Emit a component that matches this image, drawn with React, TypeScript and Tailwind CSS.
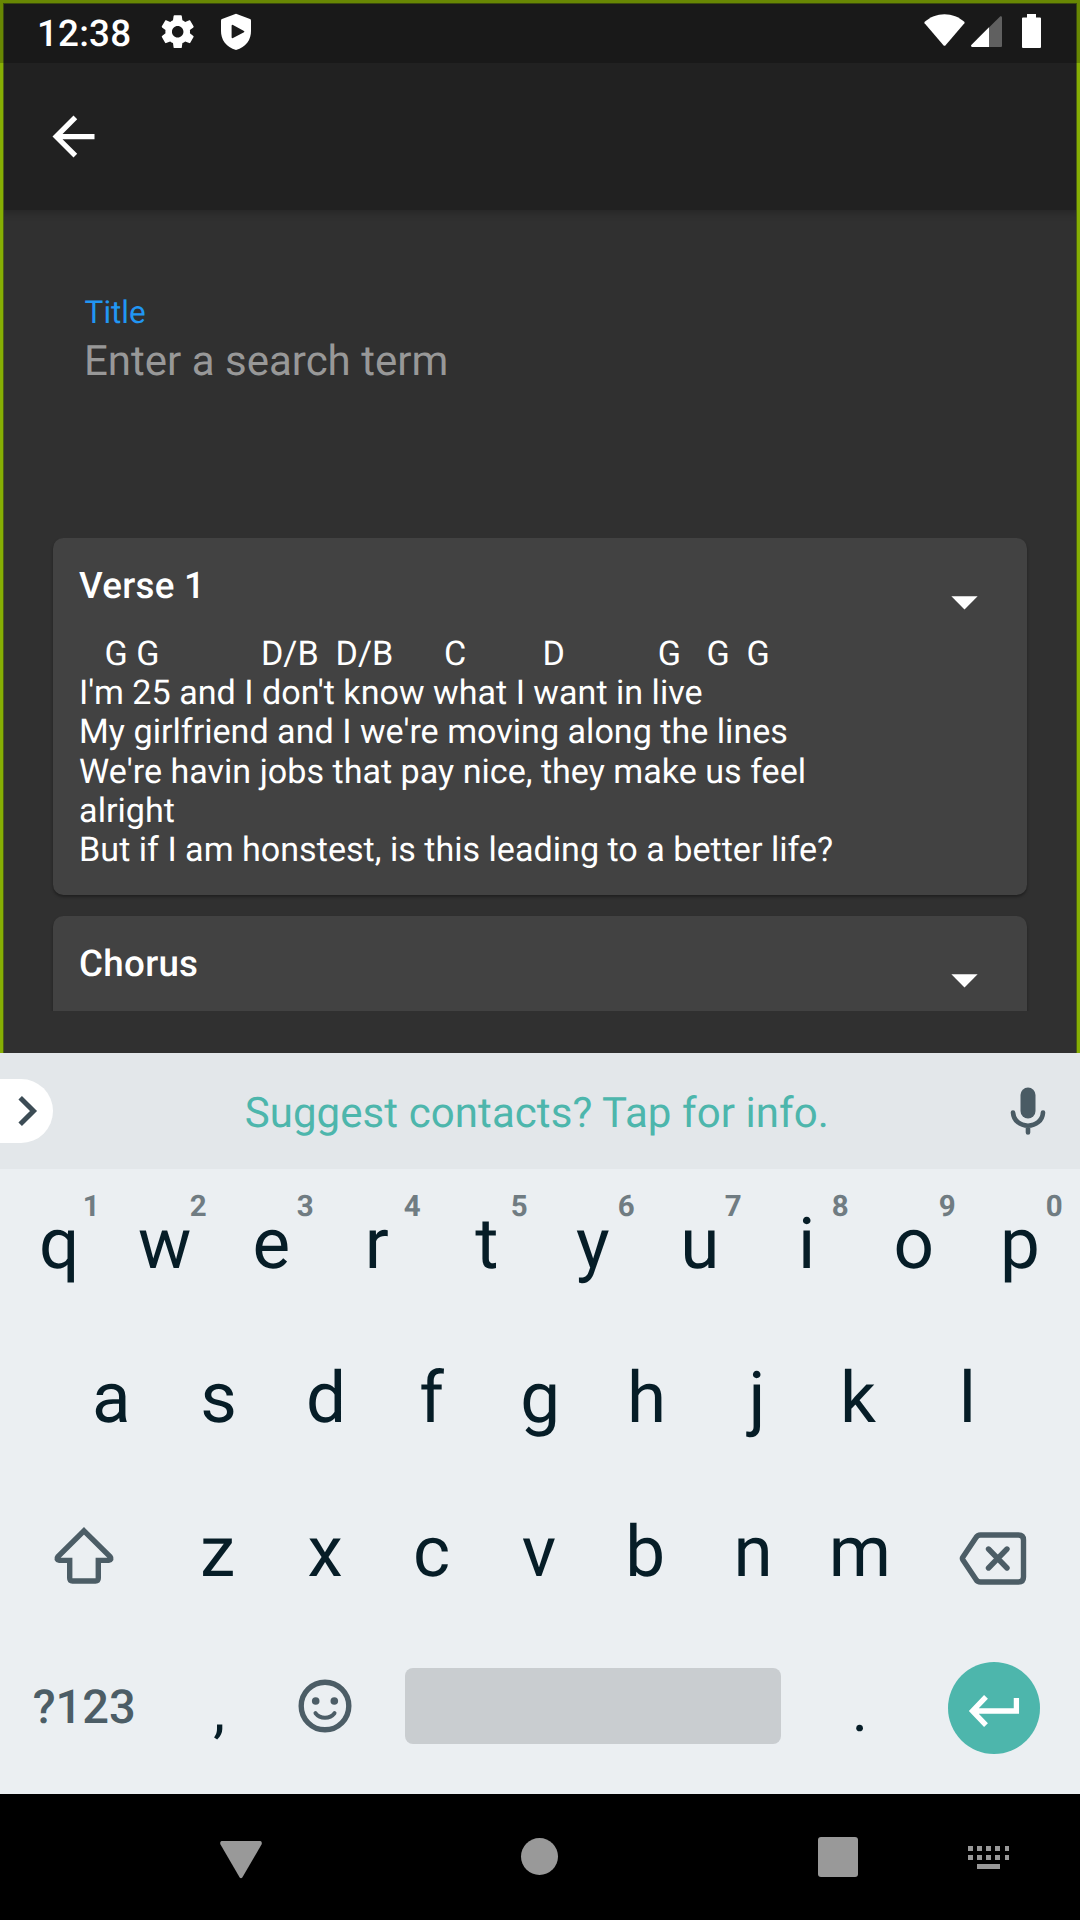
import React from "react";

const SETTINGS =
  "M19.43 12.98c.04-.32.07-.64.07-.98s-.03-.66-.07-.98l2.11-1.65c.19-.15.24-.42.12-.64l-2-3.46c-.12-.22-.39-.3-.61-.22l-2.49 1c-.52-.4-1.08-.73-1.69-.98l-.38-2.65C14.46 2.18 14.25 2 14 2h-4c-.25 0-.46.18-.49.42l-.38 2.65c-.61.25-1.17.59-1.69.98l-2.49-1c-.23-.09-.49 0-.61.22l-2 3.46c-.13.22-.07.49.12.64l2.11 1.65c-.04.32-.07.65-.07.98s.03.66.07.98l-2.11 1.65c-.19.15-.24.42-.12.64l2 3.46c.12.22.39.3.61.22l2.49-1c.52.4 1.08.73 1.69.98l.38 2.65c.03.24.24.42.49.42h4c.25 0 .46-.18.49-.42l.38-2.65c.61-.25 1.17-.59 1.69-.98l2.49 1c.23.09.49 0 .61-.22l2-3.46c.12-.22.07-.49-.12-.64l-2.11-1.65zM12 15.5c-1.93 0-3.5-1.57-3.5-3.5s1.57-3.5 3.5-3.5 3.5 1.57 3.5 3.5-1.57 3.5-3.5 3.5z";

function StatusBar() {
  return (
    <div className="relative z-20 flex h-[63px] items-start bg-black/[.22] pl-[37px] text-white">
      <span className="mt-[12px] w-[121px] text-[36.75px] leading-[43px] font-medium tracking-[0.2px]">12:38</span>
      <svg className="mt-[12px] h-[39.4px] w-[39.4px]" viewBox="0 0 24 24" fill="currentColor">
        <path d={SETTINGS} />
      </svg>
      <svg className="mt-[13px] ml-[23.6px] h-[38px] w-[30px]" viewBox="0 0 30 38">
        <path
          d="M15 .7 L29 6 Q30 6.4 30 7.4 V18 C30 27 25 34 15 37 C5 34 0 27 0 18 V7.4 Q0 6.4 1 6 Z"
          fill="#fff"
        />
        <path d="M11 12 Q11.3 11.6 12 12 L23 18 Q23.8 18.6 23 19.2 L12 25 Q11 25.4 10.6 24.6 V12.4 Z" fill="#1a1a1a" />
      </svg>
      <div className="ml-auto flex items-start pr-[39px]">
        <svg className="mt-[14px] h-[33px] w-[41px]" viewBox="0 0 41 33" fill="currentColor">
          <path d="M.7 7.8 C6 3 13 .2 20.500 .2 S35 3 40.300 7.800 Q40.900 8.500 40.400 9.300 L21.600 31.300 Q20.500 32.300 19.400 31.300 L.6 9.300 Q.1 8.500 .7 7.800 Z" />
        </svg>
        <svg className="mt-[16px] ml-[6px] h-[31px] w-[31px]" viewBox="0 0 31 31">
          <path d="M29.300 .3 Q31 0 31 1.500 V30 Q31 31 30 31 H18 V11.600 Z" fill="#606060" />
          <path d="M18 11.200 V31 H1 Q-.5 30.300 .3 28.900 Z" fill="#fff" />
        </svg>
        <svg className="mt-[14px] ml-[20px] h-[34px] w-[19px]" viewBox="0 0 19 34" fill="currentColor">
          <path d="M5 0 H14 V3.500 H18 Q19 3.500 19 4.500 V33 Q19 34 18 34 H1 Q0 34 0 33 V4.500 Q0 3.500 1 3.500 H5 Z" />
        </svg>
      </div>
    </div>
  );
}

function SongCard({ title, lines }: { title: string; lines: string[] }) {
  return (
    <section className="flex h-[357px] shrink-0 justify-between rounded-[10.5px] bg-[#424242] pt-[26.25px] pr-[30.9px] pl-[26.1px] text-white shadow-[0_2px_3px_rgba(0,0,0,0.35)]">
      <div>
        <h2 className="mb-[27.6px] text-[36.75px] leading-[43px] font-medium tracking-[0.26px]">{title}</h2>
        <div className="text-[34.125px] leading-[39.27px] whitespace-pre">
          {lines.map((line, i) => (
            <p key={i}>{line}</p>
          ))}
        </div>
      </div>
      <svg className="mt-[5.5px] h-[63px] w-[63px]" viewBox="0 0 24 24" fill="currentColor">
        <path d="M7 10l5 5 5-5z" />
      </svg>
    </section>
  );
}

const VERSE = [
  "   G G            D/B  D/B      C         D           G   G  G",
  "I'm 25 and I don't know what I want in live",
  "My girlfriend and I we're moving along the lines",
  "We're havin jobs that pay nice, they make us feel",
  "alright",
  "But if I am honstest, is this leading to a better life?",
];

function AppScreen() {
  return (
    <div className="relative flex h-[1053px] flex-col bg-[#303030]">
      <div className="pointer-events-none absolute inset-0 z-10 border-[3px] border-b-0 border-[#86ae04]">
        <div className="h-full border border-b-0 border-[#4b5e14]" />
      </div>
      <header className="relative h-[210px] bg-[#212121] shadow-[0_2px_8px_rgba(0,0,0,0.25)]">
        <StatusBar />
        <svg className="mt-[42px] ml-[42px] h-[63px] w-[63px]" viewBox="0 0 24 24" fill="#fff">
          <path d="M20 11H7.830l5.590-5.590L12 4l-8 8 8 8 1.410-1.410L7.830 13H20v-2z" />
        </svg>
      </header>
      <div className="flex h-[328px] flex-col gap-[6px] pt-[84px] pl-[84px]">
        <label className="pl-[0.6px] text-[31.5px] leading-[37px] text-[#2196f3]">Title</label>
        <div className="text-[42px] leading-[49px] text-[#989898]">Enter a search term</div>
      </div>
      <main className="flex h-[473px] flex-col gap-[21px] overflow-hidden px-[53px]">
        <SongCard title="Verse 1" lines={VERSE} />
        <SongCard title="Chorus" lines={[]} />
      </main>
    </div>
  );
}

/* Horizontal distance from the middle of a glyph's advance to the middle of its ink, in px at 71px. */
const INK_OFFSET: Record<string, number> = {
  q: -1.4, e: 0.3, r: 1.9, t: -1.2, p: 0.8,
  a: 0.2, d: -0.6, f: 0.9, g: -0.6, j: -3.4, k: 2.6,
  z: 0.3, c: 0.5, b: 0.8, ",": -1.2,
};

function Key({ label, hint }: { label: string; hint?: string }) {
  return (
    <div className="relative flex h-full w-[107px] items-center justify-center pb-[5px] text-[71px] leading-none text-[#061d27]">
      <span style={{ translate: `${-(INK_OFFSET[label] ?? 0)}px` }}>{label}</span>
      {hint && (
        <span className="absolute top-[20px] right-[11.5px] text-[29.5px] leading-[34px] font-bold text-[#707c82]">{hint}</span>
      )}
    </div>
  );
}

function PunctuationKey({ label }: { label: string }) {
  return (
    <div className="flex h-full w-[107px] items-center justify-center pt-[3px] text-[60px] leading-none text-[#061d27]">
      <span style={{ translate: `${-(INK_OFFSET[label] ?? 0)}px` }}>{label}</span>
    </div>
  );
}

function Keyboard() {
  return (
    <div className="h-[741px] bg-[#ebeff2]">
      <div className="flex h-[116px] items-center bg-[#e3e7ea]">
        <div className="flex h-[64px] w-[52.7px] items-center rounded-r-[32px] bg-white">
          <svg className="ml-[17px] h-[32px] w-[21px]" viewBox="0 0 21 32" fill="none">
            <path d="M3.200 2.800 L16.500 16 L3.200 29.200" stroke="#3c4c55" strokeWidth="5" />
          </svg>
        </div>
        <div className="mt-[5px] ml-[192px] text-[42px] leading-[49px] tracking-[0.08px] text-[#4db6ac]">
          Suggest contacts? Tap for info.
        </div>
        <svg className="mr-[34px] mb-[1px] ml-auto h-[48px] w-[36px]" viewBox="0 0 36 48">
          <rect x="10.500" y=".5" width="15" height="31" rx="7.500" fill="#4a5b64" />
          <path d="M3 25.500 C3.500 33.500 10 38.700 18 38.700 S32.500 33.500 33 25.500 M18 38.700 V45.500" fill="none" stroke="#4a5b64" strokeWidth="4.600" strokeLinecap="round" />
        </svg>
      </div>
      <div className="flex h-[154.5px] justify-center pt-[1px] pr-[1.5px]">
        {"qwertyuiop".split("").map((c, i) => (
          <Key key={c} label={c} hint={String((i + 1) % 10)} />
        ))}
      </div>
      <div className="flex h-[154.5px] justify-center pr-[1px]">
        {"asdfghjkl".split("").map((c) => (
          <Key key={c} label={c} />
        ))}
      </div>
      <div className="flex h-[154.5px] justify-center pr-[2px]">
        <div className="flex w-[160.5px] justify-center">
          <svg className="mt-[48px] h-[60px] w-[62px]" viewBox="0 0 62 60" fill="none">
            <path
              d="M31 4.800 L57 30.500 Q59.500 33.600 55.500 34.400 H45.300 V52 Q45.300 55 42.500 55 H19.500 Q16.700 55 16.700 52 V34.400 H6.500 Q2.500 33.600 5 30.500 Z"
              stroke="#4c5d66"
              strokeWidth="5.400"
            />
          </svg>
        </div>
        {"zxcvbnm".split("").map((c) => (
          <Key key={c} label={c} />
        ))}
        <div className="flex w-[160.5px] justify-center pr-[2px]">
          <svg className="mt-[53px] h-[56px] w-[70px]" viewBox="0 0 70 56" fill="none" stroke="#4c5d66" strokeWidth="5.400">
            <path d="M22.500 4 H60.500 Q65.500 4 65.500 9 V46 Q65.500 51 60.500 51 H22.500 Q19.500 51 18 48.500 L4.800 28.700 Q4 27.500 4.800 26.300 L18 6.500 Q19.500 4 22.500 4 Z" />
            <path d="M30.500 18 L49 37 M49 18 L30.500 37" strokeLinecap="round" />
          </svg>
        </div>
      </div>
      <div className="flex h-[154.5px] justify-center pr-[2px]">
        <div className="flex w-[160.5px] items-center justify-center pb-[3px] text-[47px] font-medium text-[#4c5d66]">?123</div>
        <PunctuationKey label="," />
        <div className="flex w-[107px] justify-center">
          <svg className="mt-[46px] h-[54px] w-[54px]" viewBox="0 0 54 54" fill="none" stroke="#4c5d66">
            <circle cx="27" cy="27" r="23.800" strokeWidth="5.400" />
            <circle cx="17.700" cy="22" r="3.800" fill="#4c5d66" stroke="none" />
            <circle cx="36.300" cy="22" r="3.800" fill="#4c5d66" stroke="none" />
            <path d="M17.500 34.200 Q21 38.700 27 38.700 T36.500 34.200" strokeWidth="4" strokeLinecap="round" />
          </svg>
        </div>
        <div className="mx-[26px] mt-[35.500px] h-[76px] w-[376px] rounded-[8px] bg-[#c9cdd0]" />
        <PunctuationKey label="." />
        <div className="flex w-[160.5px] justify-center">
          <div className="mt-[29.500px] flex h-[92px] w-[92px] items-center justify-center rounded-full bg-[#4db6ac]">
            <svg className="mt-[6px] h-[34px] w-[52px]" viewBox="0 0 52 34" fill="none" stroke="#fff" strokeWidth="5.300">
              <path d="M18 2.800 L4.500 17 L18 31.200 M5 17 H48.400 V4" />
            </svg>
          </div>
        </div>
      </div>
    </div>
  );
}

function NavBar() {
  return (
    <div className="flex h-[126px] items-center bg-black text-[#999999]">
      <svg className="mt-[5px] ml-[220px] h-[38px] w-[42px]" viewBox="0 0 42 38" fill="currentColor">
        <path d="M1.500 0 H40.500 Q42.500 1 41.500 3.500 L22.300 36.500 Q21 38 19.700 36.500 L.5 3.500 Q-.5 1 1.500 0 Z" />
      </svg>
      <div className="mb-[1px] ml-[259px] h-[37px] w-[37px] rounded-full bg-current" />
      <div className="ml-[260px] h-[40px] w-[40px] rounded-[3px] bg-current" />
      <div className="mt-[1px] ml-[110px] flex w-[41px] flex-col gap-[4px]">
        {[0, 1].map((row) => (
          <div key={row} className="flex justify-between">
            {[0, 1, 2, 3, 4].map((dot) => (
              <div key={dot} className="h-[5px] w-[4.5px] bg-current" />
            ))}
          </div>
        ))}
        <div className="mx-auto h-[5px] w-[23px] bg-current" />
      </div>
    </div>
  );
}

export default function App() {
  return (
    <div className="h-[1920px] w-[1080px] overflow-hidden font-['Roboto',sans-serif] [text-rendering:geometricPrecision]">
      <AppScreen />
      <Keyboard />
      <NavBar />
    </div>
  );
}
